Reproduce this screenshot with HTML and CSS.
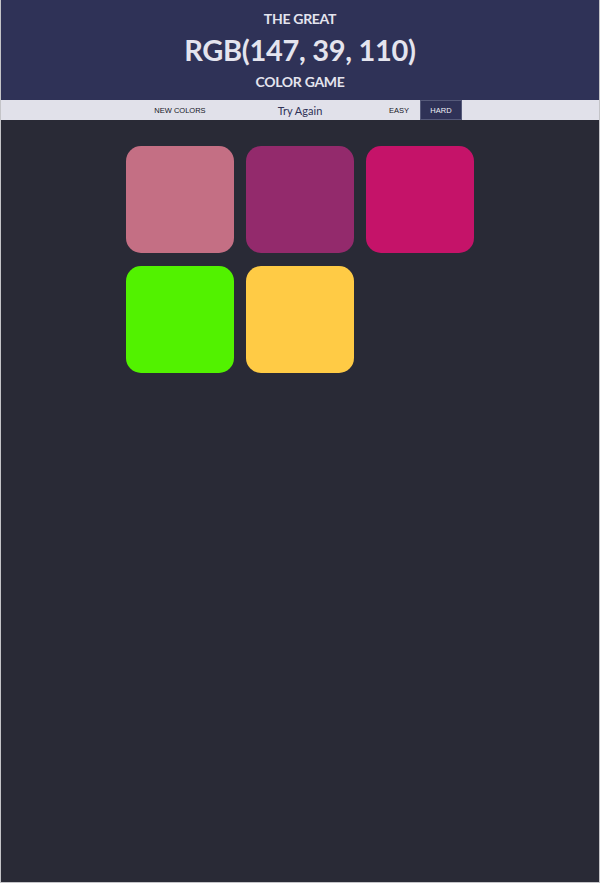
FILE: index.html
```html
<!DOCTYPE html>
<html lang="en">
<head>
<meta charset="utf-8">
<title>Color Game</title>
<link rel="stylesheet" href="styles.css">
</head>
<body>
<div class="page">
  <header class="header">
    <div class="line small">THE GREAT</div>
    <div class="line big">RGB(147, 39, 110)</div>
    <div class="line small">COLOR GAME</div>
  </header>
  <nav class="stripe">
    <button class="btn new">NEW COLORS</button>
    <span class="message">Try Again</span>
    <button class="btn mode">EASY</button>
    <button class="btn mode selected">HARD</button>
  </nav>
  <main class="container">
    <div class="square" style="background:#c46f84"></div>
    <div class="square" style="background:#932a6c"></div>
    <div class="square" style="background:#c51369"></div>
    <div class="square" style="background:#52f200"></div>
    <div class="square" style="background:#ffcb45"></div>
  </main>
</div>
</body>
</html>
```
FILE: styles.css
```css
html, body {
  margin: 0;
  padding: 0;
  height: 100%;
}
body {
  background: #c4c4c8;
  font-family: "Lato", "Liberation Sans", sans-serif;
}
.page {
  box-sizing: border-box;
  height: 883px;
  margin: 0 1px;
  background: #292a36;
  border-bottom: 1px solid #c4c4c8;
}
.header {
  background: #2f3257;
  color: #e4e4ee;
  text-align: center;
  padding: 8px 0;
  font-weight: 700;
}
.line.small {
  font-size: 14px;
  line-height: 22px;
  letter-spacing: -0.3px;
}
.line.small:last-child {
  line-height: 24px;
}
.line.big {
  font-size: 29px;
  line-height: 40px;
  letter-spacing: -0.3px;
}
.header {
  padding-bottom: 6px;
}
.stripe {
  background: #e1e1ea;
  height: 20px;
  display: flex;
  justify-content: center;
  align-items: stretch;
}
.btn {
  border: none;
  background: none;
  padding: 0;
  margin: 0;
  font-family: "Liberation Sans", Arial, sans-serif;
  font-size: 7.5px;
  color: #15161f;
  height: 20px;
}
.btn.new {
  width: 84px;
  margin-right: 18px;
}
.message {
  width: 120px;
  text-align: center;
  font-size: 11px;
  line-height: 22px;
  color: #2f3257;
}
.btn.mode {
  width: 42px;
}
.message + .btn.mode {
  margin-left: 18px;
}
.btn.selected {
  background: #2f3257;
  color: #f0f0f6;
  border: 1px solid #565a7a;
  box-sizing: border-box;
}
.container {
  width: 348px;
  margin: 26px auto 0;
  display: grid;
  grid-template-columns: repeat(3, 108px);
  grid-auto-rows: 107px;
  column-gap: 12px;
  row-gap: 13px;
}
.square {
  border-radius: 15px;
}
```
